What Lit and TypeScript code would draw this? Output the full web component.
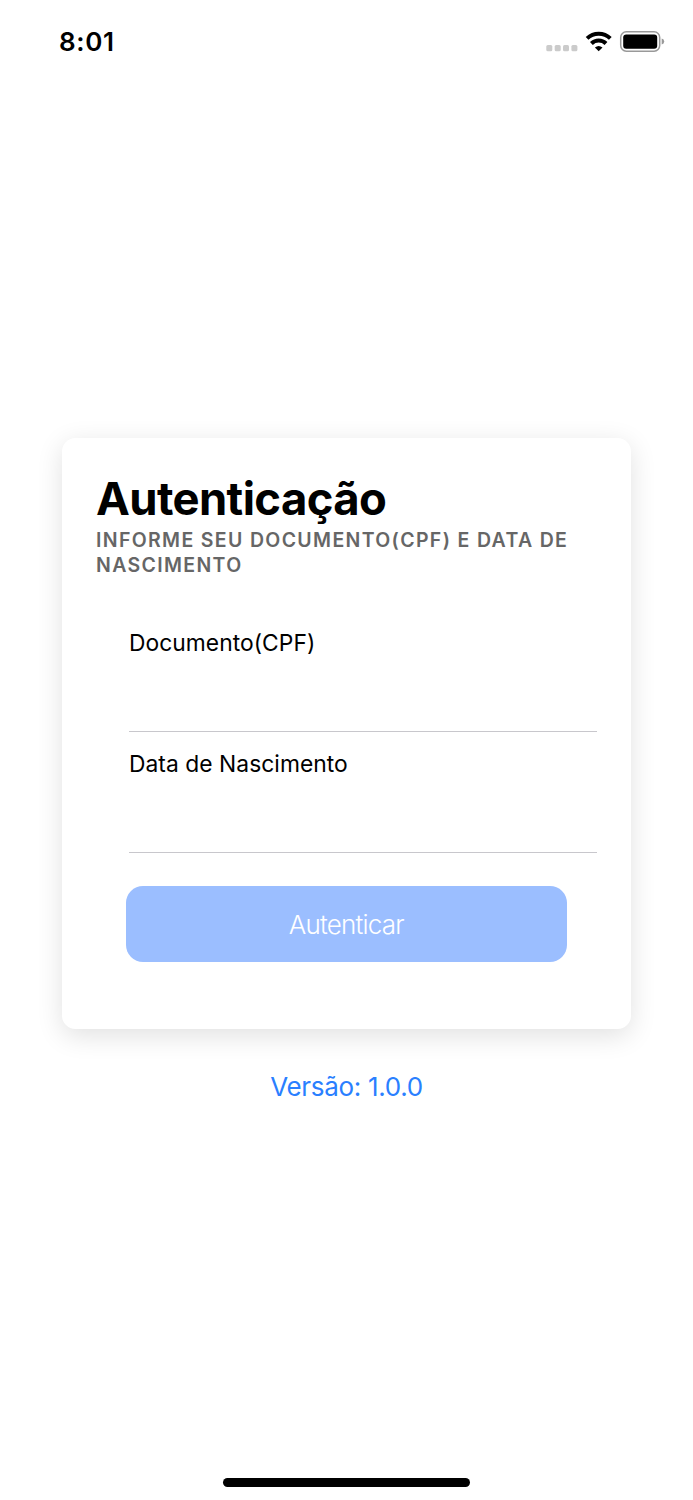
import { LitElement, html, css } from "lit";
import { customElement } from "lit/decorators.js";

@customElement("app-root")
export class AppRoot extends LitElement {
  static styles = css`
    :host {
      display: flex;
      flex-direction: column;
      align-items: center;
      box-sizing: border-box;
      width: 100%;
      height: 1500px;
      overflow: hidden;
      background: #fff;
      color: #000;
      font-family: Inter, "Liberation Sans", sans-serif;
      -webkit-font-smoothing: antialiased;
    }
    * {
      box-sizing: border-box;
    }
    .status {
      display: flex;
      justify-content: space-between;
      align-items: center;
      align-self: stretch;
      flex: none;
      height: 84px;
      padding: 0 28px 0 59px;
    }
    .time {
      font-size: 26px;
      font-weight: 600;
      line-height: 30px;
      letter-spacing: 0.6px;
    }
    .signals {
      display: block;
      width: 120px;
      height: 30px;
    }
    .card {
      flex: none;
      width: 569px;
      height: 591px;
      margin-top: 353.5px;
      padding: 33px 34px 0;
      border-radius: 13.4px;
      background: #fff;
      box-shadow: 0 6.7px 26.8px rgba(0, 0, 0, 0.12);
    }
    .title {
      margin: 0 0 1px;
      font-size: 45.4px;
      font-weight: 700;
      line-height: 56px;
      letter-spacing: -0.6px;
      white-space: nowrap;
    }
    .subtitle {
      margin: 0;
      font-size: 19.5px;
      font-weight: 600;
      line-height: 25px;
      letter-spacing: 1.34px;
      text-transform: uppercase;
      color: #666;
    }
    .fields {
      padding-left: 33px;
      margin-top: 32.5px;
    }
    .field {
      display: flex;
      flex-direction: column;
      height: 121.5px;
      padding-top: 17.5px;
      border-bottom: 1px solid #c8c7cc;
    }
    .label {
      font-size: 22.8px;
      line-height: 30px;
      letter-spacing: 0.05px;
      white-space: nowrap;
    }
    .input {
      width: 100%;
      height: 60px;
      padding: 0;
      border: 0;
      outline: 0;
      background: transparent;
      font: inherit;
      font-size: 22.8px;
    }
    .submit {
      display: block;
      width: 441.5px;
      height: 75.5px;
      margin: 33px 0 0 29.5px;
      padding: 1px 0 0;
      border: 0;
      border-radius: 17px;
      background: #9bbeff;
      color: #fff;
      font-family: inherit;
      font-size: 26px;
      font-weight: 300;
      letter-spacing: -0.8px;
    }
    .version {
      margin-top: 42px;
      color: #2a7fff;
      font-size: 26px;
      line-height: 32px;
      letter-spacing: -0.32px;
    }
    .home {
      width: 247px;
      height: 8.5px;
      margin: auto 0 13.5px;
      border-radius: 5px;
      background: #000;
    }
  `;

  render() {
    return html`
      <header class="status">
        <span class="time">8:01</span>
        <svg class="signals" viewBox="545 27 120 30" aria-hidden="true">
          <g fill="#cbcbcb">
            <rect x="546.3" y="45" width="6" height="6.2" rx="1.5" />
            <rect x="554.7" y="45" width="6" height="6.2" rx="1.5" />
            <rect x="563" y="45" width="6" height="6.2" rx="1.5" />
            <rect x="571.4" y="45" width="6" height="6.2" rx="1.5" />
          </g>
          <g fill="none" stroke="#000" stroke-width="4">
            <path d="M587.1 38.4A16.9 16.9 0 0 1 610.3 38.4" />
            <path d="M591.4 43.5A10.4 10.4 0 0 1 606 43.5" />
          </g>
          <path d="M598.7 51.2L594.9 47.4Q598.7 44.4 602.5 47.4Z" fill="#000" />
          <rect x="620.7" y="31.8" width="39" height="19.4" rx="5.6" fill="none" stroke="#999" stroke-width="1.5" />
          <rect x="623.2" y="34.4" width="34" height="14.3" rx="3" fill="#000" />
          <path d="M661.7 38.6Q664.2 39.2 664.2 41.5T661.7 44.5Z" fill="#999" />
        </svg>
      </header>
      <main class="card">
        <h1 class="title">Autenticação</h1>
        <p class="subtitle">Informe seu documento(CPF) e data de nascimento</p>
        <div class="fields">
          <label class="field">
            <span class="label">Documento(CPF)</span>
            <input class="input" type="text" />
          </label>
          <label class="field">
            <span class="label">Data de Nascimento</span>
            <input class="input" type="text" />
          </label>
        </div>
        <button class="submit" type="button">Autenticar</button>
      </main>
      <div class="version">Versão: 1.0.0</div>
      <div class="home"></div>
    `;
  }
}
